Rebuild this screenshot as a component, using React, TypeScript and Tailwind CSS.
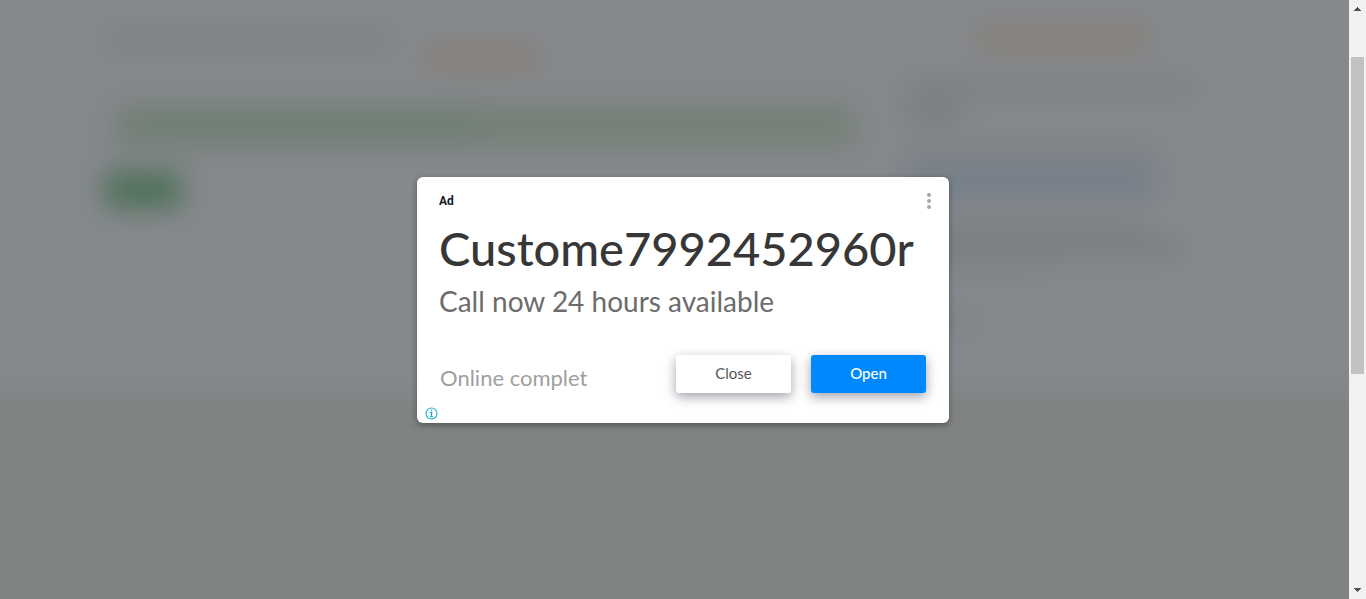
import React from "react";

function PageBehind() {
  return (
    <div aria-hidden="true" className="min-w-0 flex-1 overflow-hidden bg-[#7f8382]">
      <div className="-mx-8 -mt-8 h-[427px] bg-[#85888c] blur-[14px]">
        <div className="mx-auto flex max-w-[1140px] justify-between pt-8">
          <div className="w-[750px]">
            <div className="flex">
              <div className="mt-8 h-4 w-[286px] rounded-lg bg-[#7a7d81]" />
              <div className="mt-12 ml-8 h-5 w-[116px] rounded-lg bg-[#877d70]" />
            </div>
            <div className="mt-9 ml-2 flex h-11 items-center bg-[#758077] px-6">
              <div className="h-4 w-[340px] bg-[#6a7d73]" />
            </div>
            <div className="mt-6 h-9 w-[76px] bg-[#4c7056]" />
          </div>
          <div className="w-[340px]">
            <div className="mt-7 ml-[72px] h-5 w-[172px] rounded-lg bg-[#877d6f]" />
            <div className="mt-8 h-4 w-[290px] bg-[#7b7e81]" />
            <div className="mt-2 h-4 w-14 bg-[#75787c]" />
            <div className="mt-6 h-4 w-[252px] bg-[#7b8084]" />
            <div className="mt-3 h-5 w-[252px] bg-[#6d7b88]" />
            <div className="mt-6 h-4 w-[240px] bg-[#7c8083]" />
            <div className="mt-2 h-4 w-[276px] bg-[#777b7d]" />
            <div className="mt-2 h-3 w-[140px] bg-[#7e8285]" />
            <div className="mt-10 h-3 w-[76px] bg-[#7a7e81]" />
          </div>
        </div>
      </div>
    </div>
  );
}

function ScrollTrack() {
  return (
    <div aria-hidden="true" className="flex w-[17px] shrink-0 flex-col items-center justify-between bg-[#f1f1f1]">
      <svg width="17" height="17" viewBox="0 0 17 17" fill="#505050" shapeRendering="crispEdges">
        <path d="M5 11V10H6V9H7V8H8V7H9V8H10V9H11V10H12V11Z" />
      </svg>
      <div className="flex w-full flex-1 flex-col items-center pt-10">
        <div className="h-[317px] w-[13px] bg-[#c1c1c1]" />
      </div>
      <svg width="17" height="17" viewBox="0 0 17 17" fill="#505050" shapeRendering="crispEdges">
        <path d="M5 6V7H6V8H7V9H8V10H9V9H10V8H11V7H12V6Z" />
      </svg>
    </div>
  );
}

function AdDialog() {
  return (
    <div
      role="dialog"
      aria-labelledby="ad-title"
      className="w-full max-w-[532px] rounded-md bg-white font-['Lato','Open_Sans',sans-serif] shadow-[0_2px_6px_rgba(0,0,0,0.35)]"
    >
      <div className="flex items-center justify-between pt-4 pr-3 pl-[22px]">
        <span className="font-['Roboto',sans-serif] text-xs leading-4 font-bold text-[#15192b]">Ad</span>
        <button type="button" aria-label="More options" className="flex h-4 w-4 items-center justify-center">
          <svg width="4" height="16" viewBox="0 0 4 16" fill="#a8a8a8">
            <circle cx="2" cy="2" r="2" />
            <circle cx="2" cy="8" r="2" />
            <circle cx="2" cy="14" r="2" />
          </svg>
        </button>
      </div>
      <div className="px-[22px]">
        <h1 id="ad-title" className="mt-3 text-[47px] leading-[54px] font-medium text-[#373737]">
          Custome7992452960r
        </h1>
        <p className="mt-2 text-[28px] leading-9 text-[#6c6c6c]">Call now 24 hours available</p>
      </div>
      <div className="mt-9 flex items-center justify-between px-[23px]">
        <span className="pt-2 text-[22px] leading-[30px] text-[#a0a0a0]">Online complet</span>
        <div className="flex gap-5">
          <button
            type="button"
            className="h-[38px] w-[115px] rounded-[3px] bg-white text-[15px] text-[#555] shadow-[0_4px_12px_rgba(20,20,50,0.4)]"
          >
            Close
          </button>
          <button
            type="button"
            className="h-[38px] w-[115px] rounded-[3px] bg-[#0088ff] text-[15px] font-medium text-white shadow-[0_4px_12px_rgba(20,20,50,0.4)]"
          >
            Open
          </button>
        </div>
      </div>
      <a href="#" aria-label="Ad information" className="mt-[14px] mb-[3px] ml-2 block w-[13px]">
        <svg width="13" height="13" viewBox="0 0 13 13" fill="none" stroke="#18b1c8">
          <circle cx="6.5" cy="6.5" r="5.5" strokeWidth="1.1" />
          <path d="M5 5.5H6.5V9.5M5 9.6H8" strokeWidth="1" />
          <path d="M6.5 5V10M6.5 2.8V4.2" strokeWidth="1.4" />
        </svg>
      </a>
    </div>
  );
}

export default function App() {
  return (
    <main className="relative flex h-screen overflow-hidden">
      <PageBehind />
      <ScrollTrack />
      <div className="absolute inset-0 flex items-center justify-center">
        <AdDialog />
      </div>
    </main>
  );
}
